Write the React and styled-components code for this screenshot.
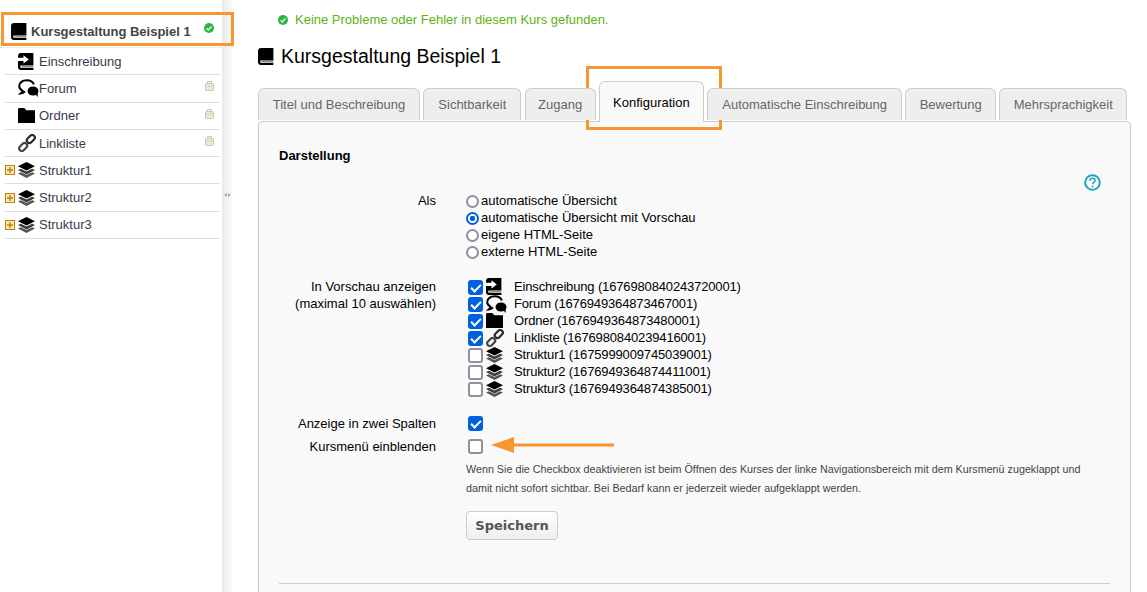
import styled, { createGlobalStyle } from "styled-components";

const GlobalStyle = createGlobalStyle`
  html, body {
    margin: 0;
    padding: 0;
    background: #fff;
    overflow: hidden;
  }
  body {
    font-family: "Liberation Sans", Arial, sans-serif;
    font-size: 13px;
    color: #000;
  }
`;

function BookIcon() {
  return (
    <svg width="16" height="17" viewBox="0 0 16 17">
      <path d="M3 0h12.400v12.400H3.200c-1.500 0-1.500 2.400 0 2.400h12.200V17H3c-1.800 0-3-1.200-3-3V3c0-1.800 1.200-3 3-3z" fill="#000" />
      <path d="M3.400 13.100h12v1h-12z" fill="#888" />
    </svg>
  );
}

function EnrollIcon() {
  return (
    <svg width="16" height="17" viewBox="0 0 16 17">
      <path d="M3 0h12.400v12.400H3.200c-1.500 0-1.500 2.400 0 2.400h12.200V17H3c-1.800 0-3-1.200-3-3V3c0-1.800 1.200-3 3-3z" fill="#000" />
      <path d="M3.400 13.100h12v1h-12z" fill="#888" />
      <path d="M0 4.800h5.500V2.200L10.800 6.400l-5.300 4.200V8H0z" fill="#fff" />
    </svg>
  );
}

function ForumIcon() {
  return (
    <svg width="21" height="18" viewBox="0 0 21 18">
      <path d="M15.800 5.500C15 3 12.300 1.200 8.800 1.200 4.500 1.200 1.200 3.700 1.200 7c0 2 1.200 3.600 3.300 4.700-.3 1-.9 1.900-1.800 2.700 1.800-.2 3.200-.9 4.300-1.900" fill="none" stroke="#000" strokeWidth="2" />
      <ellipse cx="15" cy="12" rx="5.500" ry="4.500" fill="#000" />
      <path d="M17 15l3 3-.5-4.500z" fill="#000" />
    </svg>
  );
}

function LayersIcon() {
  return (
    <svg width="17" height="16" viewBox="0 0 17 16">
      <path d="M8.500 0L17 4.300 8.500 8.600 0 4.300z" fill="#000" />
      <path d="M2.800 6.700L0 8.100l8.500 4.300L17 8.100l-2.800-1.400-5.700 2.900z" fill="#3c3c3c" />
      <path d="M2.800 10.200L0 11.600 8.500 16l8.500-4.400-2.800-1.400-5.700 2.900z" fill="#555" />
    </svg>
  );
}

function ChainIcon() {
  return (
    <svg width="18" height="18" viewBox="0 0 18 18">
      <rect x="8.300" y="2.400" width="9" height="5.200" rx="2.600" transform="rotate(-45 12.800 5)" fill="none" stroke="#2a2a2a" strokeWidth="2.200" />
      <rect x=".7" y="10.400" width="9" height="5.200" rx="2.600" transform="rotate(-45 5.200 13)" fill="none" stroke="#444" strokeWidth="2.200" />
    </svg>
  );
}

function FolderIcon() {
  return (
    <svg width="17" height="15" viewBox="0 0 17 15">
      <path d="M0 1.500C0 .7.500 0 1.300 0h5l2 2.200H17V15H0z" fill="#000" />
    </svg>
  );
}

function LockBadge() {
  return (
    <svg width="9" height="10" viewBox="0 0 9 10">
      <path d="M2.500 2.500V.6h4v1.900" fill="none" stroke="#c4bfae" strokeWidth="1" />
      <rect x=".5" y="2.500" width="8" height="7" rx=".8" fill="#ece8da" stroke="#cbc6b5" />
      <path d="M1 5h7" stroke="#d8d3c2" />
    </svg>
  );
}

function ExpandBox() {
  return (
    <svg width="10" height="10" viewBox="0 0 10 10">
      <rect x=".5" y=".5" width="9" height="9" fill="#fbe9a8" stroke="#b9820f" />
      <path d="M2 5h6M5 2v6" stroke="#b9820f" strokeWidth="1.400" />
    </svg>
  );
}

function CheckDot() {
  return (
    <svg width="10" height="10" viewBox="0 0 10 10">
      <circle cx="5" cy="5" r="5" fill="#2fb344" />
      <path d="M2.600 5.200l1.700 1.700 3.200-3.400" fill="none" stroke="#e6f7e6" strokeWidth="1.400" />
    </svg>
  );
}

function HelpGlyph() {
  return (
    <svg width="17" height="17" viewBox="0 0 17 17">
      <circle cx="8.500" cy="8.500" r="7.300" fill="#fff" stroke="#1ea3c0" strokeWidth="2" />
      <path d="M6 6.700c0-1.500 1.100-2.400 2.500-2.400s2.600.9 2.600 2.200c0 1.800-2.500 1.900-2.500 3.700" fill="none" stroke="#1ea3c0" strokeWidth="1.600" />
      <circle cx="8.600" cy="12.400" r="1" fill="#1ea3c0" />
    </svg>
  );
}

const treeRows = [
  { label: "Einschreibung", icon: <EnrollIcon /> },
  { label: "Forum", icon: <ForumIcon />, locked: true },
  { label: "Ordner", icon: <FolderIcon />, locked: true },
  { label: "Linkliste", icon: <ChainIcon />, locked: true },
  { label: "Struktur1", icon: <LayersIcon />, expand: true },
  { label: "Struktur2", icon: <LayersIcon />, expand: true },
  { label: "Struktur3", icon: <LayersIcon />, expand: true },
];

const tabs = [
  { label: "Titel und Beschreibung", width: 162 },
  { label: "Sichtbarkeit", width: 98 },
  { label: "Zugang", width: 71 },
  { label: "Konfiguration", width: 105, active: true },
  { label: "Automatische Einschreibung", width: 195 },
  { label: "Bewertung", width: 90.5 },
  { label: "Mehrsprachigkeit", width: 128 },
];

const radios = [
  { label: "automatische Übersicht" },
  { label: "automatische Übersicht mit Vorschau", checked: true },
  { label: "eigene HTML-Seite" },
  { label: "externe HTML-Seite" },
];

const previews = [
  { label: "Einschreibung (1676980840243720001)", icon: <EnrollIcon />, checked: true },
  { label: "Forum (1676949364873467001)", icon: <ForumIcon />, checked: true },
  { label: "Ordner (1676949364873480001)", icon: <FolderIcon />, checked: true },
  { label: "Linkliste (1676980840239416001)", icon: <ChainIcon />, checked: true },
  { label: "Struktur1 (1675999009745039001)", icon: <LayersIcon /> },
  { label: "Struktur2 (1676949364874411001)", icon: <LayersIcon /> },
  { label: "Struktur3 (1676949364874385001)", icon: <LayersIcon /> },
];

export default function App() {
  return (
    <Page>
      <GlobalStyle />
      <Sidebar>
        <RootRow>
          <BookIcon />
          <RootLabel>Kursgestaltung Beispiel 1</RootLabel>
          <StatusSlot><CheckDot /></StatusSlot>
        </RootRow>
        {treeRows.map((row) => (
          <TreeRow key={row.label}>
            <ExpandSlot>{row.expand && <ExpandBox />}</ExpandSlot>
            <TreeIcon>{row.icon}</TreeIcon>
            <span>{row.label}</span>
            {row.locked && <LockSlot><LockBadge /></LockSlot>}
          </TreeRow>
        ))}
      </Sidebar>
      <Splitter><SplitterGrip /></Splitter>
      <Main>
        <Notice>
          <CheckDot />
          Keine Probleme oder Fehler in diesem Kurs gefunden.
        </Notice>
        <Title>
          <BookIcon />
          Kursgestaltung Beispiel 1
        </Title>
        <TabBar>
          {tabs.map((tab) => (
            <Tab key={tab.label} $active={tab.active} $width={tab.width}>{tab.label}</Tab>
          ))}
        </TabBar>
        <Panel>
          <SectionTitle>Darstellung</SectionTitle>
          <HelpSlot><HelpGlyph /></HelpSlot>
          <FormRow $top={29}>
            <FieldLabel>Als</FieldLabel>
            <Stack>
              {radios.map((radio) => (
                <RadioLine key={radio.label}>
                  <Radio type="radio" name="view" defaultChecked={radio.checked} />
                  {radio.label}
                </RadioLine>
              ))}
            </Stack>
          </FormRow>
          <FormRow $top={18}>
            <FieldLabel>In Vorschau anzeigen<br />(maximal 10 auswählen)</FieldLabel>
            <Stack>
              {previews.map((item) => (
                <PreviewLine key={item.label}>
                  <Check type="checkbox" defaultChecked={item.checked} />
                  <PreviewIcon>{item.icon}</PreviewIcon>
                  {item.label}
                </PreviewLine>
              ))}
            </Stack>
          </FormRow>
          <FormRow $top={18}>
            <FieldLabel>Anzeige in zwei Spalten</FieldLabel>
            <Check type="checkbox" defaultChecked />
          </FormRow>
          <FormRow $top={6}>
            <FieldLabel>Kursmenü einblenden</FieldLabel>
            <Check type="checkbox" />
          </FormRow>
          <HintText>
            Wenn Sie die Checkbox deaktivieren ist beim Öffnen des Kurses der linke Navigationsbereich mit dem Kursmenü zugeklappt und<br />
            damit nicht sofort sichtbar. Bei Bedarf kann er jederzeit wieder aufgeklappt werden.
          </HintText>
          <SaveButton>Speichern</SaveButton>
          <Rule />
        </Panel>
      </Main>
      <CalloutTree />
      <CalloutTab />
      <CalloutArrow width="125" height="16" viewBox="0 0 125 16">
        <path d="M0 8L23 0v6.500h100v3H23V16z" fill="#f7962f" />
      </CalloutArrow>
    </Page>
  );
}

const Page = styled.div`
  position: relative;
  display: flex;
  width: 1147px;
  height: 592px;
  overflow: hidden;
`;

const Sidebar = styled.nav`
  width: 222px;
  flex: none;
  padding-top: 19px;
  box-sizing: border-box;
`;

const RootRow = styled.div`
  display: flex;
  align-items: center;
  height: 29px;
  padding: 0 0 4px 11px;
  gap: 4px;
  border-bottom: 1px dotted #ddd;
  box-sizing: border-box;
`;

const RootLabel = styled.span`
  font-size: 13px;
  font-weight: bold;
  color: #444;
  white-space: nowrap;
`;

const StatusSlot = styled.span`
  display: flex;
  margin: -7px 0 0 9px;
`;

const TreeRow = styled.div`
  position: relative;
  display: flex;
  align-items: center;
  height: 27.3px;
  margin: 0 2px 0 5px;
  border-bottom: 1px solid #ddd;
  box-sizing: border-box;
  color: #3a3a4a;
`;

const ExpandSlot = styled.span`
  width: 13px;
  flex: none;
  display: flex;
`;

const TreeIcon = styled.span`
  width: 21px;
  flex: none;
  display: flex;
  align-items: center;
`;

const LockSlot = styled.span`
  position: absolute;
  right: 6px;
  top: 6px;
  display: flex;
`;

const Splitter = styled.div`
  width: 10px;
  flex: none;
  background: linear-gradient(to right, #e9e9e9, #fafafa);
  display: flex;
  justify-content: center;
  padding-top: 193px;
  box-sizing: border-box;
`;

const SplitterGrip = styled.span`
  display: flex;
  gap: 1px;
  height: 5px;
  &::before,
  &::after {
    content: "";
    width: 0;
    height: 0;
    border-style: solid;
    border-color: transparent;
    border-width: 2.500px 3px;
  }
  &::before {
    border-left-width: 0;
    border-right-color: #aaa;
  }
  &::after {
    border-right-width: 0;
    border-left-color: #aaa;
  }
`;

const Main = styled.main`
  flex: 1;
  min-width: 0;
  padding: 11px 16px 0 26px;
`;

const Notice = styled.div`
  display: flex;
  align-items: center;
  gap: 7px;
  margin-left: 20px;
  height: 17px;
  color: #5cb312;
`;

const Title = styled.h2`
  display: flex;
  align-items: center;
  gap: 7px;
  margin: 17px 0 0;
  height: 22px;
  font-size: 19.500px;
  font-weight: normal;
`;

const TabBar = styled.div`
  display: flex;
  align-items: flex-end;
  gap: 3.300px;
  height: 40px;
  margin-top: 14px;
  position: relative;
  z-index: 1;
`;

const Tab = styled.div`
  display: flex;
  align-items: center;
  justify-content: center;
  width: ${(p) => p.$width}px;
  height: ${(p) => (p.$active ? "41px" : "32px")};
  margin-bottom: ${(p) => (p.$active ? "-1px" : "1px")};
  background: ${(p) => (p.$active ? "#f9f9f9" : "#eee")};
  color: ${(p) => (p.$active ? "#000" : "#666")};
  border: 1px solid #ccc;
  border-bottom: none;
  border-radius: 6px 6px 0 0;
  box-sizing: border-box;
  white-space: nowrap;
`;

const Panel = styled.section`
  position: relative;
  height: 480px;
  padding: 26px 20px 0;
  background: #f9f9f9;
  border: 1px solid #ccc;
  border-radius: 4px;
  box-sizing: border-box;
`;

const SectionTitle = styled.h4`
  margin: 0;
  font-size: 13px;
  line-height: 15px;
  font-weight: bold;
`;

const HelpSlot = styled.span`
  position: absolute;
  right: 29px;
  top: 52px;
  display: flex;
`;

const FormRow = styled.div`
  display: grid;
  grid-template-columns: 157px 1fr;
  column-gap: 30px;
  margin-top: ${(p) => p.$top}px;
  align-items: start;
`;

const FieldLabel = styled.div`
  text-align: right;
  line-height: 17px;
`;

const Stack = styled.div`
  display: flex;
  flex-direction: column;
`;

const RadioLine = styled.label`
  display: flex;
  align-items: center;
  height: 17px;
`;

const Radio = styled.input`
  appearance: none;
  width: 13px;
  height: 13px;
  margin: 1px 2px 0 0;
  border: 2px solid #8f8f9d;
  border-radius: 50%;
  background: #fff;
  box-sizing: border-box;
  &:checked {
    border-color: #0060df;
    background: radial-gradient(circle, #0060df 0 2.500px, #fff 3px);
  }
`;

const PreviewLine = styled.label`
  display: flex;
  align-items: center;
  height: 17px;
  letter-spacing: -0.150px;
`;

const Check = styled.input`
  appearance: none;
  width: 15px;
  height: 15px;
  margin: 1px 0 0 2px;
  border: 2px solid #8f8f9d;
  border-radius: 3px;
  background: #fff;
  box-sizing: border-box;
  position: relative;
  &:checked {
    background: #0060df;
    border-color: #0060df;
  }
  &:checked::after {
    content: "";
    position: absolute;
    left: 3px;
    top: 0;
    width: 4px;
    height: 8px;
    border: solid #fff;
    border-width: 0 2px 2px 0;
    transform: rotate(45deg);
  }
`;

const PreviewIcon = styled.span`
  width: 28px;
  margin-left: 3px;
  flex: none;
  display: flex;
  align-items: center;
`;

const HintText = styled.p`
  margin: 5px 0 0 187px;
  font-size: 10.760px;
  line-height: 19px;
  color: #444;
`;

const SaveButton = styled.button`
  display: block;
  margin: 13px 0 0 187px;
  width: 92px;
  height: 29px;
  font-family: "DejaVu Sans", sans-serif;
  font-size: 13px;
  font-weight: bold;
  color: #555;
  background: linear-gradient(#fff, #eee);
  border: 1px solid #ccc;
  border-radius: 4px;
`;

const Rule = styled.hr`
  margin: 43px 0 0;
  border: none;
  border-top: 1px solid #ccc;
`;

const CalloutTree = styled.div`
  position: absolute;
  left: 1px;
  top: 12px;
  width: 233px;
  height: 34px;
  border: 3px solid #f7962f;
  box-sizing: border-box;
`;

const CalloutTab = styled.div`
  position: absolute;
  left: 586px;
  top: 66px;
  width: 136px;
  height: 64px;
  border: 3px solid #f7962f;
  box-sizing: border-box;
`;

const CalloutArrow = styled.svg`
  position: absolute;
  left: 491px;
  top: 437px;
`;
